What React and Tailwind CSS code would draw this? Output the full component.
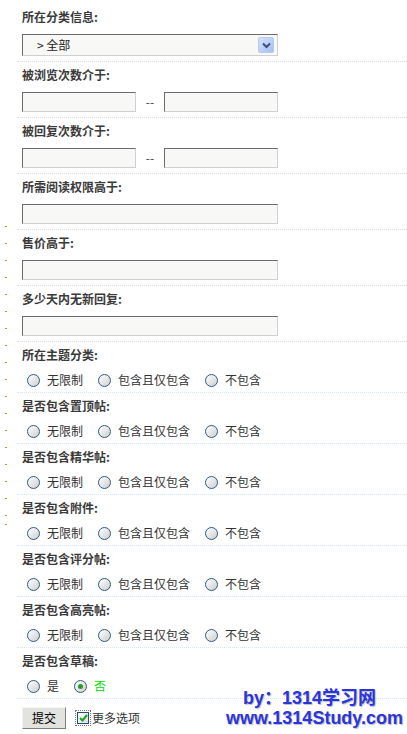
import React from 'react'

const inputSections = [
  { label: '被浏览次数介于:', range: true },
  { label: '被回复次数介于:', range: true },
  { label: '所需阅读权限高于:' },
  { label: '售价高于:' },
  { label: '多少天内无新回复:' },
]

const radioSections = [
  '所在主题分类:',
  '是否包含置顶帖:',
  '是否包含精华帖:',
  '是否包含附件:',
  '是否包含评分帖:',
  '是否包含高亮帖:',
]

const dashes = [226, 243, 260, 277, 294, 311, 328, 345, 362, 379, 396, 413, 430, 447, 464, 481, 498, 515, 524]

const TextBox = ({ w }) => (
  <input
    type="text"
    className={`${w} h-[20px] bg-[#f8f8f6] border border-t-[#6b6b6b] border-l-[#6b6b6b] border-r-[#d0d0d0] border-b-[#d0d0d0] outline-none`}
  />
)

const Label = ({ children }) => (
  <div className="h-[16px] leading-[16px] text-[12px] font-bold text-[#3a3a3a]">{children}</div>
)

const Radio = ({ checked }) => (
  <span className="relative w-[13px] h-[13px] shrink-0 rounded-full border border-[#2c5a88] bg-linear-to-br from-white to-[#cfcfcf] flex items-center justify-center">
    {checked && <span className="w-[5px] h-[5px] rounded-full bg-[#2a9a2a]" />}
  </span>
)

const Option = ({ text, checked, green }) => (
  <span className="flex items-center ml-[5px] mr-[10px]">
    <Radio checked={checked} />
    <span className={`ml-[7px] text-[12px] leading-[16px] ${green ? 'text-[#00dd00]' : 'text-[#333333]'}`}>{text}</span>
  </span>
)

const RadioSection = ({ label, children }) => (
  <div className="ml-[17px] pl-[5px] pt-[5px] pb-[4px] border-b border-dotted border-[#d4e7f5]">
    <Label>{label}</Label>
    <div className="mt-[9px] h-[16px] flex items-center">{children}</div>
  </div>
)

export default function App() {
  return (
    <div className="relative w-[407px] h-[734px] overflow-hidden bg-white font-['Noto_Sans_CJK_SC',sans-serif]">
      {/* first section: select */}
      <div className="ml-[17px] pl-[5px] pt-[9px] pb-[5px] border-b border-dotted border-[#dddddd]">
        <Label>所在分类信息:</Label>
        <div className="mt-[9px] w-[256px] h-[22px] bg-[#f8f8f6] border border-t-[#6b6b6b] border-l-[#6b6b6b] border-r-[#d0d0d0] border-b-[#d0d0d0] flex items-center justify-between">
          <span className="pl-[14px] text-[12px] text-[#222]">&gt; 全部</span>
          <span className="mr-[3px] w-[16px] h-[16px] rounded-[2px] border border-[#b8c8ee] bg-linear-to-br from-[#d4e0fc] to-[#a9bff2] flex items-center justify-center">
            <svg width="9" height="7" viewBox="0 0 9 7">
              <path d="M1 1.5 L4.5 5 L8 1.5" fill="none" stroke="#3a4f80" strokeWidth="2" />
            </svg>
          </span>
        </div>
      </div>

      {inputSections.map((s) => (
        <div key={s.label} className="ml-[17px] pl-[5px] pt-[5px] pb-[5px] border-b border-dotted border-[#dddddd]">
          <Label>{s.label}</Label>
          <div className="mt-[9px] flex items-center">
            {s.range ? (
              <>
                <TextBox w="w-[114px]" />
                <span className="w-[28px] text-center text-[12px] text-[#444]">--</span>
                <TextBox w="w-[114px]" />
              </>
            ) : (
              <TextBox w="w-[256px]" />
            )}
          </div>
        </div>
      ))}

      {radioSections.map((l) => (
        <RadioSection key={l} label={l}>
          <Option text="无限制" />
          <Option text="包含且仅包含" />
          <Option text="不包含" />
        </RadioSection>
      ))}

      <RadioSection label="是否包含草稿:">
        <Option text="是" />
        <Option text="否" checked green />
      </RadioSection>

      {/* submit row */}
      <div className="ml-[22px] pt-[8px] flex items-center">
        <button className="w-[44px] h-[22px] bg-[#e2e2de] border border-t-[#f4f4f4] border-l-[#f4f4f4] border-r-[#808080] border-b-[#808080] text-[12px] text-black leading-none">
          提交
        </button>
        <span className="ml-[9px] p-[1px] border border-dotted border-[#777] flex">
          <span className="w-[12px] h-[12px] border border-[#1c5180] bg-linear-to-br from-white to-[#dcdcdc] flex items-center justify-center">
            <svg width="9" height="8" viewBox="0 0 9 8">
              <path d="M1 4 L3.5 6.5 L8 1" fill="none" stroke="#21a121" strokeWidth="2" />
            </svg>
          </span>
        </span>
        <span className="ml-[1px] text-[12px] text-[#333]">更多选项</span>
      </div>

      {/* orange margin marks */}
      {dashes.map((y) => (
        <span key={y} className="absolute left-[5px] w-[2px] h-[1px] bg-[#d88a2a]" style={{ top: y }} />
      ))}

      {/* watermark */}
      <div className="absolute left-[226px] top-[688px] font-['Liberation_Sans','Noto_Sans_CJK_SC',sans-serif] font-bold text-[18px] leading-[20px] text-[#2a36dc] [text-shadow:1px_1px_1px_#b8bccc]">
        <div className="pl-[17px]">by：1314学习网</div>
        <div>www.1314Study.com</div>
      </div>
    </div>
  )
}
